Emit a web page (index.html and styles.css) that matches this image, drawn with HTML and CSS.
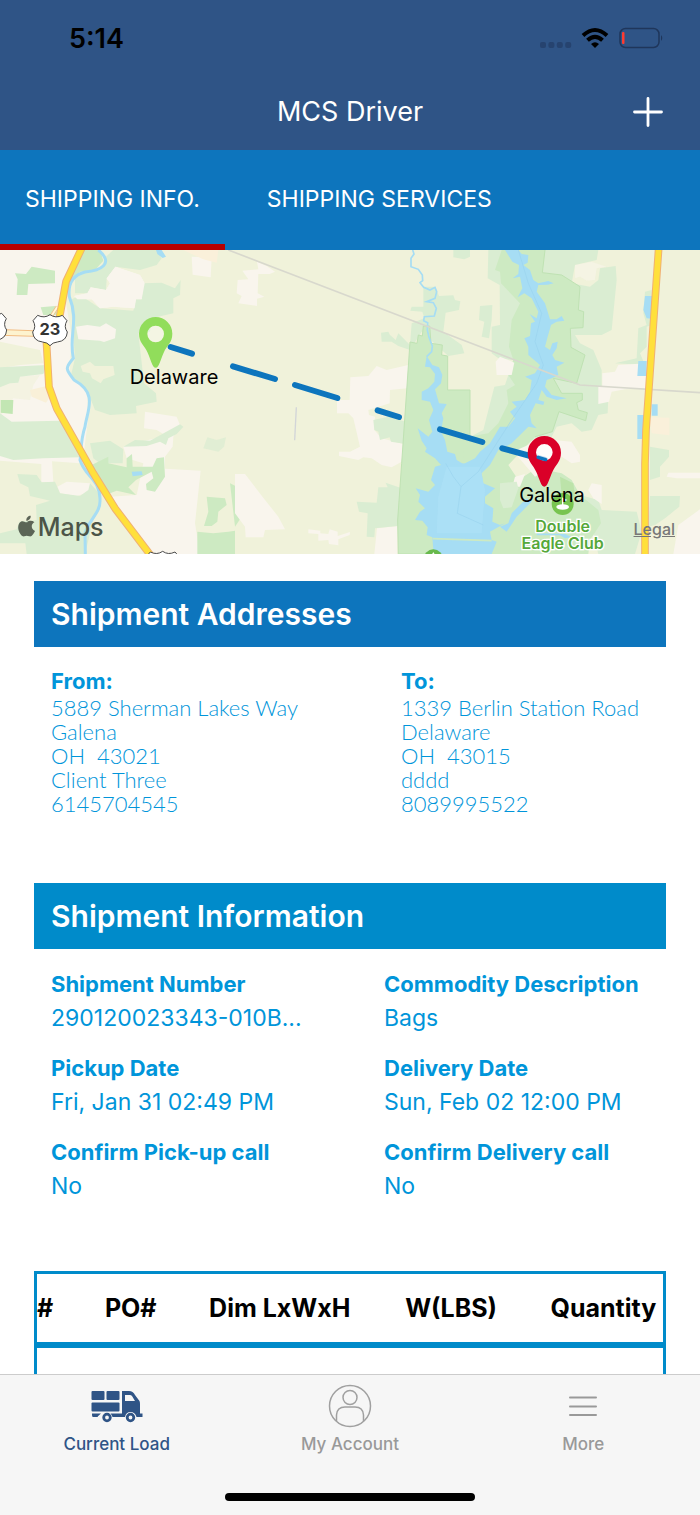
FILE: index.html
```html
<!DOCTYPE html>
<html lang="en">
<head>
<meta charset="utf-8">
<meta name="viewport" content="width=device-width, initial-scale=1">
<title>MCS Driver</title>
<link rel="stylesheet" href="styles.css">
</head>
<body>
<div class="app">
  <header class="top">
    <div class="status">
      <span class="clock">5:14</span>
      <svg class="status-icons" viewBox="0 0 124 24" width="124" height="24" aria-hidden="true">
        <g fill="#26436f">
          <rect x="0" y="16" width="6" height="6" rx="2"/><rect x="8.400" y="16" width="6" height="6" rx="2"/>
          <rect x="16.800" y="16" width="6" height="6" rx="2"/><rect x="25.200" y="16" width="6" height="6" rx="2"/>
        </g>
        <g fill="none" stroke="#000" stroke-width="4">
          <path d="M43 9.500Q55 -1.500 67 9.500"/>
          <path d="M47.500 14.300Q55 7.300 62.500 14.300"/>
        </g>
        <path d="M51 18Q55 14.500 59 18L55 22Z"/>
        <rect x="80" y="2.500" width="39" height="19" rx="5.500" fill="none" stroke="#1f365b" stroke-width="1.500"/>
        <path d="M121 9Q123.500 12 121 15Z" fill="#1f365b"/>
        <rect x="82" y="6" width="2.500" height="12" rx="1" fill="#ff3b30"/>
      </svg>
    </div>
    <div class="titlebar">
      <h1 class="title">MCS Driver</h1>
      <button class="add" type="button" aria-label="Add">
        <svg viewBox="0 0 30 30" width="30" height="30"><path d="M15 1.500V28.500M1.500 15H28.500" stroke="#fff" stroke-width="2.800" stroke-linecap="round"/></svg>
      </button>
    </div>
  </header>
  <nav class="tabs">
    <a class="tab tab-active" href="#info">SHIPPING INFO.</a>
    <a class="tab" href="#services">SHIPPING SERVICES</a>
  </nav>
  <main class="content">
    <section class="map" aria-label="Route map">
      <svg class="map-canvas" viewBox="0 0 2100 912" preserveAspectRatio="xMidYMid slice">
        <rect width="2100" height="912" fill="#f0f2da"/>
        <!-- open land, west -->
        <g fill="#f9f5ed">
          <path d="M0 0H240L190 110 215 260 208 370 262 430 264 510 250 620 240 640 156 634 160 697H124V642L0 632Z"/>
          <path d="M346 50L420 75 434 100 425 148H408L404 175 340 170 300 175 275 148H232L222 138 262 130 272 112 318 120 330 100 320 85Z"/>
          <path d="M228 230L262 225 300 230 318 220 348 238 345 265 312 276 300 272 235 268Z"/>
          <path d="M242 348L270 335 285 348H340L344 375 310 388 302 400 276 385 270 370 248 365Z"/>
          <path d="M575 20L635 22 632 82 578 74Z"/>
          <path d="M435 485L530 500 540 525 520 560 518 590 495 620V656L602 662 585 820 600 912H440L330 740 410 735 430 640 380 625 370 590 400 580 500 558 470 540 432 535Z"/>
          <path d="M172 710L200 695 270 700 272 725 230 738 180 730Z"/>
        </g>
        <g fill="#f0f2da">
          <path d="M0 275L120 300 130 340 60 345 0 355Z"/>
          <path d="M68 525L150 528 158 560 132 575 134 602 70 580Z"/>
          <path d="M0 400L55 398 58 380 120 375 100 405 90 450 40 445 0 500Z" opacity=".6"/>
        </g>
        <!-- meadows -->
        <g fill="#daedd2">
          <path d="M212 150L240 135 300 175 400 182 408 148H425L430 100 485 98 525 115 542 90 540 135 520 145V190L455 205 450 245 415 250 432 400 468 430 470 455 408 468 410 490 330 495 285 480 265 430 212 380 225 325Z"/>
          <path d="M225 75L300 60 318 20 340 0H470L485 25 470 45 420 60 346 50 320 85 318 120 272 112 262 130 225 130Z"/>
          <path d="M0 352L140 345 130 372 60 380 55 398 30 400 0 412Z"/>
          <path d="M0 490L35 515 180 512 210 560 245 600 240 622 130 625 40 630 0 618Z"/>
          <path d="M52 672L110 675 125 697 165 695 180 730 240 738 265 720 270 700 302 735 298 780 280 810 255 912H80L76 880H0V850L50 838 58 815 110 810 108 765 150 752 90 738 85 712 60 700Z"/>
          <path d="M270 580L330 572 370 598 368 640 300 640 280 625Z"/>
          <path d="M370 590L405 570 450 572 540 523 550 530 530 552 505 565 498 585 480 575 440 588Z"/>
          <path d="M610 595L622 562 650 570 678 562 672 590 655 605Z" opacity=".7"/>
        </g>
        <g fill="#f9f5ed">
          <path d="M346 50L420 75 434 100 425 148H408L404 175 340 170 300 175 275 148H232L222 138 262 130 272 112 318 120 330 100 320 85Z"/>
          <path d="M228 230L262 225 300 230 318 220 348 238 345 265 312 276 300 272 235 268Z"/>
        </g>
        <path d="M242 348L270 335 285 348H340L344 375 310 388 302 400 276 385 270 370 248 365Z" fill="#f0f2da"/>
        <g fill="#cdeac2">
          <path d="M45 70L78 72 95 50 165 62 165 100 85 102 82 135H50L53 88Z"/>
          <path d="M240 0H300L310 32 285 60 240 65 206 96Z"/>
          <path d="M122 172L165 168 180 195H130Z"/>
          <path d="M275 645L325 620V640L380 652 380 625 396 612 398 650H458L470 625 492 622 495 680 465 725 440 720 438 702 460 685 455 665 408 690 385 712 408 735 350 722 330 730 282 680Z"/>
          <path d="M620 740L675 745 680 765 655 785 652 815 635 828H612L625 785Z"/>
          <path d="M592 845L640 850 685 845 705 842V912H592Z"/>
          <path d="M690 700L720 715 725 800 705 830Z"/>
        </g>
        <path d="M2 450H40L38 492 2 488Z" fill="#c2e6b3"/>
        <path d="M90 420L140 408 150 440 138 458 95 440Z" fill="#f9f0d8"/>
        <path d="M550 0H655L650 38 610 28 570 10Z" fill="#faf0da"/>
        <path d="M468 0H485L498 20 488 24 472 12ZM395 665L425 664 428 675 398 679Z" fill="#a6ddf4"/>
        <path d="M295 0C345 42 300 62 255 66C220 75 203 98 208 140C238 215 205 255 220 325C190 360 202 360 222 390C295 430 262 480 255 530C240 575 245 605 240 630C255 680 302 690 300 750C302 790 265 810 255 850L256 912" fill="none" stroke="#a6ddf4" stroke-width="9"/>
        <!-- middle -->
        <g transform="translate(705 0)">
          <g fill="#f9f5ed">
            <path d="M66 35L95 48 120 65 104 72 70 72 68 130 88 140 66 146V168L10 160 20 138 5 130 8 90 40 88 22 62 70 58Z"/>
            <path d="M346 382L400 378 425 348 455 360 520 345 516 415 465 420 464 460 400 480 402 495 420 500 418 540 440 565 505 582 500 635 470 652 440 645 410 625 385 622 370 630 312 618V605H345L375 590 355 505 340 490H306V450H344Z"/>
            <path d="M0 672H30L90 750 130 800 150 838 90 840 85 862 32 862 30 830 0 790Z"/>
            <path d="M220 838L256 842V850L280 852 284 838 308 845V858L345 846 344 855 310 868V886L282 882 280 870 250 872V852L220 850Z"/>
            <path d="M426 835L487 828V912H418Z"/>
          </g>
          <g fill="#daedd2">
            <path d="M565 110H600L612 138 655 136 660 150 676 154 672 180 632 188 625 245 680 285 688 310 640 318 560 245 525 300 490 288 470 275 440 275 438 248 460 245 465 255 482 270 490 250 525 285 530 220 568 205 562 185 526 182 530 170H565Z"/>
            <path d="M415 510L460 500 512 515V582L468 575 464 562 435 570 430 545 418 540Z"/>
            <path d="M365 755L425 758 430 712H458L452 698 500 715 488 828 420 835 418 862 395 860 398 790 372 785Z"/>
            <path d="M655 0H705V20L688 28 655 22Z"/>
          </g>
          <path d="M525 276L546 280 550 255 562 258 565 228H584L588 280 622 285 620 315 638 318V420H705V912H490L488 810 500 640Z" fill="#cdeac2" stroke="#bfe2b3" stroke-width="3"/>
          <path d="M533 0L537 12 528 25 528 50 550 58 562 75 563 92 555 98 566 112 585 120 600 112 605 125 600 145 575 155 595 158 604 175 598 198 568 200 566 212 578 218 577 240 582 262 592 288 590 305 575 320" fill="none" stroke="#a6ddf4" stroke-width="5"/>
        </g>
        <!-- east -->
        <g transform="translate(1395 0)">
          <g fill="#daedd2">
            <path d="M70 0H400L395 30 330 45 320 100 375 110 400 90 405 55 452 48 455 90 440 240 410 255 330 255 345 280 385 300 410 360 410 435 430 440 428 490 400 495 380 540 350 545 320 520 275 530 260 560 10 610 15 560 55 540 60 520 88 410 120 405 130 375 145 330 100 325 80 310V230L105 225 104 105 68 85Z"/>
            <path d="M45 168L82 165 80 210 72 265 50 260 58 215 42 210Z"/>
            <path d="M540 125L560 120 560 225 545 230 545 290 525 310 540 345 450 340 515 325 520 235 545 225 535 190Z"/>
            <path d="M555 590L612 600V620L585 650 585 680 555 690ZM555 738L645 738 643 770 600 805 570 825 550 830Z"/>
            <path d="M345 735L400 750 410 780 515 785 530 845 510 912H400L380 830Z"/>
          </g>
          <path d="M110 0H240L232 68 290 75 345 110 340 180 356 185 354 233 316 235 318 292 360 315 335 400 265 385 290 430 352 430 352 450 335 458 340 480 367 488 362 512 282 485 262 545 210 560 130 645 160 690 215 655 290 670 320 690 345 735 400 780 408 820 375 870 370 912H0L-5 580 10 560 70 550 100 520 130 460 125 420 150 405 128 372 145 330 132 290 140 210 165 160 108 100 105 65 90 60Z" fill="#cdeac2"/>
          <path d="M240 0L232 68 290 75 345 110 340 180 356 185 354 233 316 235 318 292 360 315 335 400 265 385 290 430 352 430 352 450 335 458 340 480 367 488 362 512 282 485 262 545 210 560" fill="none" stroke="#bfe2b3" stroke-width="3"/>
          <g fill="#f9f5ed">
            <path d="M92 335L105 320 148 338 140 375 95 375Z"/>
            <path d="M330 45L380 35 425 50 395 55 390 90 365 92 345 80 330 85Z" opacity=".5"/>
            <path d="M412 370L450 365 460 345 548 340V415L480 418 440 425 432 455 400 462V410H412Z"/>
            <path d="M155 600L190 585 210 565 320 575 345 615 345 635 320 640 290 620 260 650 210 680 180 645 150 610Z"/>
            <path d="M150 680L180 672 165 710H142Z"/>
            <path d="M380 700L410 705V762L385 745 370 720Z"/>
            <path d="M610 668H705V685H635L605 680ZM640 825L705 778V912H625Z"/>
          </g>
          <path d="M552 502L613 503V556L560 550Z" fill="#faf0da"/>
          <path d="M105 700L155 695 160 715 140 772 115 775 105 750Z" fill="#daedd2"/>
        </g>
        <!-- reservoir -->
        <g fill="#a6ddf4">
          <path d="M1280 318L1297 345 1317 352 1327 375 1323 400 1305 418 1317 460 1340 462 1325 490 1330 505 1323 545 1335 570 1342 605 1365 612 1370 630 1395 645 1420 632V912H1301L1297 862 1280 855 1283 832 1267 812 1245 810 1260 785 1275 775 1255 755 1260 735 1247 715 1285 725 1305 705 1293 690 1305 650 1323 645 1305 625 1275 605 1280 595 1265 572 1253 535 1285 560 1297 545 1287 510 1300 480 1290 455 1265 450V425L1285 415 1303 395 1305 372 1290 352 1275 350Z"/>
          <path transform="translate(1395 0)" d="M120 0H160L170 12 190 15 188 38 175 45 195 60 205 90 220 100 250 93 266 100 248 104 220 105 215 125 240 160 255 208 275 208 290 198 298 212 275 215 258 225 248 260 240 290 255 300 262 280 278 275 275 295 262 315 270 330 298 338 275 350 280 375 260 385 245 390 240 410 260 435 305 445 275 450 245 440 230 420 220 450 238 455 235 465 212 460 195 495 200 520 215 535 190 530 175 545 140 580 100 600 75 645 50 670 55 700 90 715 60 740 60 760 85 775 82 815 105 825 120 820 75 845 80 870 95 875 80 912H-40V645L0 640 30 625 45 605 75 580 105 530 130 530 150 505 135 485 155 470 140 455 180 450 195 425 200 390 180 380 210 370 225 345 190 315 190 290 178 265 195 258 198 220 210 215 194 192 215 205 220 185 200 145 178 130 158 142 172 115 165 80 143 85 160 72 162 45 142 35Z"/>
          <path d="M1500 830L1525 820 1535 790 1580 745 1595 755 1550 800 1520 845ZM1610 850L1695 852 1715 862 1695 865 1680 856H1610Z"/>
          <path d="M1935 138H1957V206L1940 205 1930 180ZM1915 333H1940V378H1912ZM1955 463H1973V497H1955ZM1912 495H1935V567H1912Z"/>
        </g>
        <path d="M1340 650H1440L1455 720 1445 850H1310L1315 740Z" fill="#aee1f6" opacity=".7"/>
        <path d="M1337 640L1360 680 1383 710 1372 790 1450 825M1383 710L1435 665 1535 510 1610 400 1630 345 1605 275 1625 190 1585 100 1555 0" fill="none" stroke="#9ad3ee" stroke-width="2"/>
        <path d="M1298 866L1475 872" stroke="#cdeac2" stroke-width="5"/>
        <!-- golf course -->
        <path d="M1680 680L1720 700 1725 740 1705 765 1685 735Z" fill="#bce3a9"/>
        <circle cx="1688" cy="762" r="33" fill="#78c450"/>
        <ellipse cx="1688" cy="771" rx="19" ry="8" fill="#fff"/><path d="M1686 772V742L1702 750 1690 756V772Z" fill="#fff"/>
        <!-- minor roads and rail -->
        <path d="M685 0L1740 405 2100 428" fill="none" stroke="#d8d8cd" stroke-width="5"/>
        <path d="M889 472L884 571" stroke="#d2d5d8" stroke-width="4"/>
        <path d="M0 247L145 252" stroke="#f2bd83" stroke-width="20"/><path d="M0 247L145 252" stroke="#fdf3cf" stroke-width="14"/>
        <path d="M172 170L150 205" stroke="#f2bd83" stroke-width="10"/><path d="M172 170L150 205" stroke="#fff7da" stroke-width="6"/>
        <!-- highways -->
        <g fill="none" stroke-linejoin="round">
          <path d="M245 -5L198 95 178 205M139 270L147 410 170 475 280 670 345 775 455 920M1976 -5L1938 540 1935 640V920" stroke="#f0b173" stroke-width="23"/>
          <path d="M245 -5L198 95 178 205M139 270L147 410 170 475 280 670 345 775 455 920M1976 -5L1938 540 1935 640V920" stroke="#ffe03b" stroke-width="17"/>
        </g>
        <!-- route shields -->
        <g fill="#fff" stroke="#4a4a4a" stroke-width="3">
          <path id="shield" d="M113 196Q133 206 150 194Q167 206 187 196L201 212Q190 230 202 246Q200 273 172 276Q158 277 150 287Q142 277 128 276Q100 273 98 246Q110 230 99 212Z"/>
          <use href="#shield" x="-182" y="-6"/>
          <use href="#shield" x="338" y="710"/>
        </g>
        <text x="150" y="256" class="shield-num">23</text>
        <!-- planned route -->
        <path d="M512 291L576 311M699 349L825 387M885 405L1012 444M1133 481L1197 501M1320 538L1447 576M1507 595L1635 630" stroke="#0d75bd" stroke-width="18" stroke-linecap="round"/>
        <circle cx="467" cy="252" r="27" fill="#fff" opacity=".25"/>
        <path d="M467 353C457 353 453 330 443 308C433 285 417 278 417 251A50 50 0 0 1 517 251C517 278 501 285 491 308C481 330 477 353 467 353ZM442 252A25 25 0 1 0 492 252A25 25 0 1 0 442 252Z" fill="#91dd5b" fill-rule="evenodd"/>
        <circle cx="1633" cy="607" r="27" fill="#fff" opacity=".75"/>
        <path d="M1633 710C1623 710 1619 688 1609 666C1599 643 1583 635 1583 608A50 50 0 0 1 1683 608C1683 635 1667 643 1657 666C1647 688 1643 710 1633 710ZM1608 607A25 25 0 1 0 1658 607A25 25 0 1 0 1608 607Z" fill="#da0028" fill-rule="evenodd"/>
        <path d="M1614 622L1637 629" stroke="#0d75bd" stroke-width="10" stroke-linecap="round"/>
        <text x="522" y="401" class="place">Delaware</text>
        <text x="1656" y="757" class="place">Galena</text>
        <g class="poi"><text x="1688" y="846">Double</text><text x="1688" y="897">Eagle Club</text></g>
        <circle cx="1300" cy="927" r="29" fill="#68b94c"/><path d="M1300 906L1308 920H1292Z" fill="#fff"/>
        <!-- attribution -->
        <path d="M96 817C90 813 85 817 80 817C74 817 70 812 65 814C54 818 52 834 58 847C62 855 67 861 73 859C79 856 82 857 88 859C96 861 101 851 105 843C92 837 93 821 103 817C101 815 99 813 96 813C91 811 85 812 81 815M79 812C78 803 85 797 92 797C93 805 87 812 79 812Z" fill="#4c5548" opacity=".9"/>
        <text x="113" y="858" class="brand">Maps</text>
      </svg>
      <a class="legal" href="#legal">Legal</a>
    </section>
    <div class="details">
      <section class="block">
        <h2 class="bar bar-address">Shipment Addresses</h2>
        <div class="addresses">
          <div>
            <h3 class="label">From:</h3>
            <address class="address">5889 Sherman Lakes Way<br>Galena<br>OH&nbsp; 43021<br>Client Three<br>6145704545</address>
          </div>
          <div>
            <h3 class="label">To:</h3>
            <address class="address">1339 Berlin Station Road<br>Delaware<br>OH&nbsp; 43015<br>dddd<br>8089995522</address>
          </div>
        </div>
      </section>
      <section class="block">
        <h2 class="bar">Shipment Information</h2>
        <dl class="facts">
          <div><dt class="label">Shipment Number</dt><dd class="value">290120023343-010B...</dd></div>
          <div><dt class="label">Commodity Description</dt><dd class="value">Bags</dd></div>
          <div><dt class="label">Pickup Date</dt><dd class="value">Fri, Jan 31 02:49 PM</dd></div>
          <div><dt class="label">Delivery Date</dt><dd class="value">Sun, Feb 02 12:00 PM</dd></div>
          <div><dt class="label">Confirm Pick-up call</dt><dd class="value">No</dd></div>
          <div><dt class="label">Confirm Delivery call</dt><dd class="value">No</dd></div>
        </dl>
      </section>
      <table class="items">
        <thead><tr><th scope="col">#</th><th scope="col">PO#</th><th scope="col">Dim LxWxH</th><th scope="col">W(LBS)</th><th scope="col">Quantity</th></tr></thead>
        <tbody><tr><td></td><td></td><td></td><td></td><td></td></tr></tbody>
      </table>
    </div>
  </main>
  <footer class="bottom">
    <nav class="bottom-nav">
      <a class="dest dest-active" href="#load">
        <svg viewBox="0 0 52 44" width="52" height="44" fill="#2f5486" aria-hidden="true">
          <rect x="0.500" y="7" width="13" height="9" rx="1"/><rect x="15.500" y="7" width="13" height="9" rx="1"/><rect x="0.500" y="18.500" width="28" height="9" rx="1"/>
          <path d="M1 29.500H10Q7 32 6.500 33H2Q1 33 1 31ZM22 29.500H31V7H38Q42 7 44 11L48.500 17Q49 18 49 20V29.500H51.500V33H45.500Q44 28 39.500 28T34 33H21.500Q21 31 19.500 29.500ZM34 11V17H44L41 12Q40 11 39 11Z" fill-rule="evenodd"/>
          <g fill="none" stroke="#2f5486" stroke-width="2.800"><circle cx="16" cy="33.500" r="3.300"/><circle cx="39.500" cy="33.500" r="3.300"/></g>
        </svg>
        <span>Current Load</span>
      </a>
      <a class="dest" href="#account">
        <svg viewBox="0 0 44 44" width="44" height="44" fill="none" stroke="#a0a0a0" stroke-width="1.500" aria-hidden="true">
          <circle cx="22" cy="22" r="20.500"/><circle cx="22" cy="13.500" r="7"/><path d="M8.500 37V31Q9 23 17 23H27Q35 23 35.500 31V37"/>
        </svg>
        <span>My Account</span>
      </a>
      <a class="dest" href="#more">
        <svg viewBox="0 0 44 44" width="44" height="44" aria-hidden="true"><path d="M9 13.500H35M9 22.500H35M9 31H35" stroke="#999" stroke-width="2" stroke-linecap="round"/></svg>
        <span>More</span>
      </a>
    </nav>
    <div class="home-indicator"></div>
  </footer>
</div>
</body>
</html>
```
FILE: styles.css
```css
* { box-sizing: border-box; }
body { margin: 0; background: #fff; font-family: Inter, "Liberation Sans", sans-serif; }
h1, h2, h3, dl, dd { margin: 0; }
a { color: inherit; text-decoration: none; }

.app { display: flex; flex-direction: column; height: 100vh; overflow: hidden; }
.top { background: #2f5486; color: #fff; flex: none; }
.status { display: flex; justify-content: space-between; align-items: center; height: 76px; padding: 0 36px 0 69px; }
.clock { color: #000; font-size: 27px; font-weight: 600; line-height: 32px; padding-top: 2px; }
.status-icons { display: block; }
.titlebar { display: grid; grid-template-columns: 1fr auto 1fr; align-items: center; height: 74px; padding: 0 37px 2px; }
.title { grid-column: 2; font-size: 27px; font-weight: 400; line-height: 34px; }
.add { justify-self: end; padding: 0; border: 0; background: none; height: 30px; }
.add svg { display: block; }

.tabs { display: flex; flex: none; height: 100px; background: #0d75bd; color: #fff; }
.tab { display: flex; align-items: center; padding: 10px 25px 6px; border-bottom: 6px solid transparent; font-size: 23px; }
.tab + .tab { padding-left: 42px; }
.tab-active { border-bottom-color: #b60000; }

.content { flex: 1; min-height: 0; overflow: hidden; }
.map { position: relative; height: 304px; }
.map-canvas { display: block; width: 100%; height: 100%; }
.place { font-size: 60px; text-anchor: middle; }
.shield-num { font-size: 49px; font-weight: 700; text-anchor: middle; fill: #333; }
.poi { font-size: 48px; font-weight: 600; text-anchor: middle; fill: #55a83a; stroke: #fff; stroke-width: 8px; paint-order: stroke; }
.brand { font-size: 75px; font-weight: 500; fill: #4c5548; }
.legal { position: absolute; right: 25px; bottom: 15px; color: #777; font-size: 16px; font-weight: 500; line-height: 20px; text-decoration: underline; }

.details { padding: 27px 34px 0; }
.bar { padding: 0 17px; background: #008bca; color: #fff; font-size: 30px; font-weight: 600; line-height: 66px; }
.bar-address { background: #0d75bd; }
.addresses { display: grid; grid-template-columns: 350px 1fr; padding: 19px 0 67px 17px; }
.label { color: #0095da; font-size: 22px; font-weight: 700; line-height: 30px; }
.address { color: #0095da; font-family: Lato, "Open Sans", sans-serif; font-size: 22px; font-style: normal; font-weight: 300; line-height: 24px; white-space: nowrap; }
.facts { display: grid; grid-template-columns: 333px 1fr; row-gap: 16px; padding: 20px 0 66px 17px; }
.value { color: #0095da; font-size: 23px; line-height: 38px; white-space: nowrap; }

.items { width: 100%; border: 3px solid #008bca; border-spacing: 0; }
.items th { padding: 0 50px 0 0; border-bottom: 3px solid #008bca; font-size: 25px; font-weight: 700; line-height: 68px; text-align: left; white-space: nowrap; }
.items th:last-child { padding-right: 4px; }
.items td { height: 80px; padding: 0; border-top: 3px solid #008bca; }

.bottom { flex: none; height: 141px; border-top: 1px solid #ccc; background: #f6f6f6; }
.bottom-nav { display: grid; grid-template-columns: repeat(3, 1fr); height: 118px; padding-top: 9px; }
.dest { display: flex; flex-direction: column; align-items: center; gap: 5px; color: #999; font-size: 17px; font-weight: 500; line-height: 22px; }
.dest-active { color: #2f5486; }
.home-indicator { width: 250px; height: 8px; margin: 0 auto; border-radius: 4px; background: #000; }
```
